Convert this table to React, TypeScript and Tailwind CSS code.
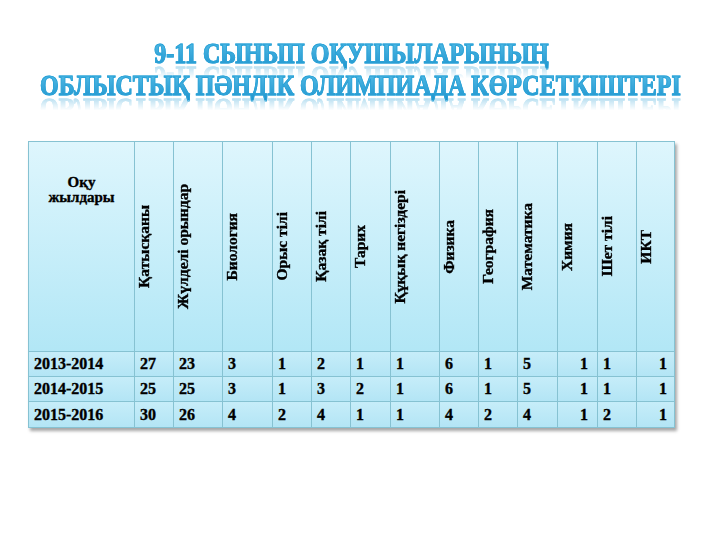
import React from "react";

const cols = "grid grid-cols-[106px_39px_49px_50px_39px_39px_40px_49px_39px_39px_40px_40px_39px_39px]";

const subjects = [
  "Қатысқаны",
  "Жүлделі орындар",
  "Биология",
  "Орыс тілі",
  "Қазақ тілі",
  "Тарих",
  "Құқық негіздері",
  "Физика",
  "География",
  "Математика",
  "Химия",
  "Шет тілі",
  "ИКТ",
];

const rows = [
  { year: "2013-2014", values: [27, 23, 3, 1, 2, 1, 1, 6, 1, 5, 1, 1, 1] },
  { year: "2014-2015", values: [25, 25, 3, 1, 3, 2, 1, 6, 1, 5, 1, 1, 1] },
  { year: "2015-2016", values: [30, 26, 4, 2, 4, 1, 1, 4, 2, 4, 1, 2, 1] },
];

// columns whose numbers sit on the right side of the cell
const rightAligned = [10, 12];

const Title = ({ children, className }: { children: React.ReactNode; className?: string }) => (
  <div
    className={`text-[30px] leading-none font-bold uppercase text-transparent bg-clip-text bg-gradient-to-b from-[#56bfe8] to-[#1d95ce] [-webkit-text-stroke:1px_#2aa2d7] scale-x-[0.8] whitespace-nowrap [-webkit-box-reflect:below_-6px_linear-gradient(transparent_45%,rgba(255,255,255,0.45))] ${className ?? ""}`}
  >
    {children}
  </div>
);

export default function App() {
  return (
    <div className="w-[720px] h-[540px] bg-white overflow-hidden font-['Liberation_Serif','DejaVu_Serif',serif] text-black">
      <div className="flex flex-col items-center pt-[38px]">
        <Title className="-translate-x-[8px]">9-11 сынып оқушыларының</Title>
        <Title className="mt-[2px]">облыстық пәндік олимпиада көрсеткіштері</Title>
      </div>

      <div className="ml-[28px] mt-[41px] w-[647px] border border-[#86c2d2] shadow-[2px_3px_3px_rgba(0,0,0,0.35)] [-webkit-text-stroke:0.35px_black]">
        {/* header */}
        <div className={`${cols} h-[210px] bg-gradient-to-b from-[#def6fd] to-[#b2e7f6] border-b border-[#86c2d2]`}>
          <div className="border-r border-[#86c2d2] pt-[33px] text-center text-[15px] font-bold leading-[15px]">
            Оқу
            <br />
            жылдары
          </div>
          {subjects.map((s, i) => (
            <div
              key={s}
              className={`flex items-center pl-[1px] ${i < subjects.length - 1 ? "border-r border-[#86c2d2]" : ""}`}
            >
              <span className="[writing-mode:vertical-rl] rotate-180 text-[15.5px] font-bold leading-[16px] whitespace-nowrap">
                {s}
              </span>
            </div>
          ))}
        </div>

        {/* data rows */}
        {rows.map((r, ri) => (
          <div
            key={r.year}
            className={`${cols} h-[25px] bg-gradient-to-b from-[#c6edf9] to-[#b3e5f5] ${ri < rows.length - 1 ? "border-b border-[#86c2d2]" : ""}`}
          >
            <div className="border-r border-[#86c2d2] pl-[5px] flex items-center text-[16px] font-bold">
              {r.year}
            </div>
            {r.values.map((v, i) => (
              <div
                key={i}
                className={`flex items-center text-[16px] font-bold ${
                  rightAligned.includes(i) ? "justify-end pr-[9px]" : "pl-[5px]"
                } ${i < r.values.length - 1 ? "border-r border-[#86c2d2]" : ""}`}
              >
                {v}
              </div>
            ))}
          </div>
        ))}
      </div>
    </div>
  );
}
